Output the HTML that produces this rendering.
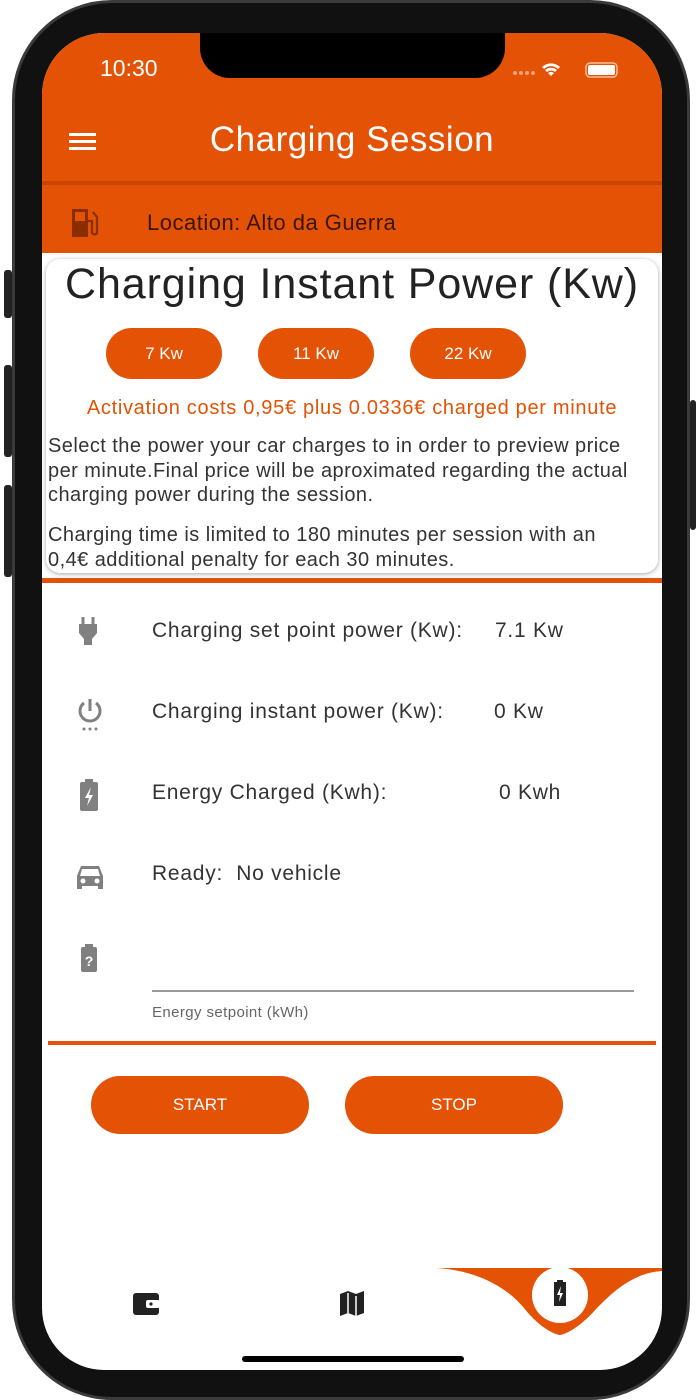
<!DOCTYPE html>
<html><head><style>
*{margin:0;padding:0;box-sizing:border-box}
body{width:700px;height:1400px;background:#fff;font-family:"Liberation Sans",sans-serif;position:relative;overflow:hidden}
.frame{position:absolute;left:12px;top:0;width:678px;height:1400px;background:#111;border-radius:100px;border:3px solid #3a3a3a}
.btnside{position:absolute;background:#222;width:8px;border-radius:3px}
.screen{position:absolute;left:42px;top:33px;width:620px;height:1337px;background:#fff;border-radius:62px;overflow:hidden}
.notch{position:absolute;left:200px;top:33px;width:305px;height:45px;background:#000;border-radius:0 0 30px 30px;z-index:5}
.or{background:#E35205}
.abs{position:absolute}
.t{color:#333;font-size:21px;letter-spacing:0.75px;position:absolute;white-space:nowrap}
.pill{position:absolute;background:#E35205;color:#fff;border-radius:26px;text-align:center}
</style></head><body>
<div class="btnside" style="left:4px;top:270px;height:48px"></div>
<div class="btnside" style="left:4px;top:365px;height:92px"></div>
<div class="btnside" style="left:4px;top:485px;height:92px"></div>
<div class="btnside" style="left:690px;top:400px;height:130px;width:6px"></div>
<div class="frame"></div>
<div class="screen">
  <div class="abs or" style="left:0;top:0;width:620px;height:150px"></div>
  <div class="abs" style="left:0;top:148px;width:620px;height:4px;background:#c94600"></div>
  <div class="abs or" style="left:0;top:152px;width:620px;height:68px"></div>
  <div class="abs" style="left:58px;top:22px;color:#fff;font-size:23px">10:30</div>
  <svg class="abs" style="left:468px;top:27px" width="110" height="20" viewBox="0 0 110 20">
    <g fill="#f3a27a"><circle cx="5" cy="13" r="2"/><circle cx="11" cy="13" r="2"/><circle cx="17" cy="13" r="2"/><circle cx="23" cy="13" r="2"/></g>
    <path d="M41 16l-3-3a5 5 0 0 1 6 0z M35 10a9 9 0 0 1 12 0l-2 2a6 6 0 0 0-8 0z M32 7a13 13 0 0 1 18 0l-2 2a10 10 0 0 0-14 0z" fill="#fff"/>
    <rect x="76" y="3" width="31" height="14" rx="4" fill="none" stroke="#f8c0a0" stroke-width="1.5"/>
    <rect x="78" y="5" width="27" height="10" rx="2" fill="#fff"/>
  </svg>
  <svg class="abs" style="left:27px;top:99px" width="28" height="20"><g fill="#fff"><rect y="1" width="27" height="3"/><rect y="8" width="27" height="3"/><rect y="15" width="27" height="3"/></g></svg>
  <div class="abs" style="left:0;width:620px;top:87px;text-align:center;color:#fff;font-size:35px;letter-spacing:0.5px">Charging Session</div>
  <svg class="abs" style="left:28px;top:174px" width="30" height="32" viewBox="0 0 30 32"><path d="M2 2h16v28H2z" fill="#8a2e00"/><rect x="5" y="5" width="10" height="9" fill="#E35205"/><path d="M18 14h4v12a3 3 0 0 0 5 0V10l-4-5" fill="none" stroke="#8a2e00" stroke-width="2.2"/></svg>
  <div class="abs" style="left:105px;top:177px;font-size:22px;letter-spacing:0.5px;color:#3a1500">Location: Alto da Guerra</div>

  <div class="abs" style="left:4px;top:226px;width:612px;height:314px;border-radius:14px;box-shadow:0 1px 5px rgba(0,0,0,.35);background:#fff"></div>
  <div class="abs" style="left:0;width:620px;top:227px;text-align:center;font-size:43px;letter-spacing:0.9px;color:#222">Charging Instant Power (Kw)</div>
  <div class="pill" style="left:64px;top:295px;width:116px;height:51px;line-height:51px;font-size:17px">7 Kw</div>
  <div class="pill" style="left:216px;top:295px;width:116px;height:51px;line-height:51px;font-size:17px">11 Kw</div>
  <div class="pill" style="left:368px;top:295px;width:116px;height:51px;line-height:51px;font-size:17px">22 Kw</div>
  <div class="abs" style="left:0;width:620px;top:364px;text-align:center;font-size:20px;letter-spacing:0.7px;color:#E35205">Activation costs 0,95€ plus 0.0336€ charged per minute</div>
  <div class="abs" style="left:6px;top:401px;width:600px;font-size:20px;letter-spacing:0.45px;line-height:24.5px;color:#333">Select the power your car charges to in order to preview price per minute.Final price will be aproximated regarding the actual charging power during the session.</div>
  <div class="abs" style="left:6px;top:490px;width:575px;font-size:20px;letter-spacing:0.45px;line-height:24.5px;color:#333">Charging time is limited to 180 minutes per session with an 0,4€ additional penalty for each 30 minutes.</div>
  <div class="abs or" style="left:0;top:545px;width:620px;height:5px"></div>

  <svg class="abs" style="left:34px;top:582px" width="26" height="32" viewBox="0 0 26 32"><path d="M7 2v7M17 2v7" stroke="#808080" stroke-width="3"/><path d="M3 9h18v9l-5 6v6h-8v-6l-5-6z" fill="#808080"/></svg>
  <div class="t" style="left:110px;top:586px">Charging set point power (Kw):</div>
  <div class="t" style="left:453px;top:586px">7.1 Kw</div>

  <svg class="abs" style="left:33px;top:663px" width="30" height="36" viewBox="0 0 30 36"><path d="M15 3v12" stroke="#808080" stroke-width="3"/><path d="M9 7a10 10 0 1 0 12 0" fill="none" stroke="#808080" stroke-width="3"/><g fill="#808080"><circle cx="9" cy="33" r="1.5"/><circle cx="15" cy="33" r="1.5"/><circle cx="21" cy="33" r="1.5"/></g></svg>
  <div class="t" style="left:110px;top:667px">Charging instant power (Kw):</div>
  <div class="t" style="left:452px;top:667px">0 Kw</div>

  <svg class="abs" style="left:36px;top:745px" width="22" height="34" viewBox="0 0 22 34"><path d="M7 1h8v3h3a2 2 0 0 1 2 2v25a2 2 0 0 1-2 2H4a2 2 0 0 1-2-2V6a2 2 0 0 1 2-2h3z" fill="#808080"/><path d="M13 9l-6 11h4l-2 8 6-11h-4z" fill="#fff"/></svg>
  <div class="t" style="left:110px;top:748px">Energy Charged (Kwh):</div>
  <div class="t" style="left:457px;top:748px">0 Kwh</div>

  <svg class="abs" style="left:32px;top:830px" width="32" height="28" viewBox="0 0 32 28"><path d="M7 3h18l4 10v13h-5v-3H8v3H3V13z" fill="#808080"/><path d="M8 6h16l2 7H6z" fill="#fff"/><circle cx="9" cy="18" r="2.5" fill="#fff"/><circle cx="23" cy="18" r="2.5" fill="#fff"/></svg>
  <div class="t" style="left:110px;top:829px">Ready:&nbsp; No vehicle</div>

  <svg class="abs" style="left:38px;top:910px" width="18" height="30" viewBox="0 0 18 30"><path d="M5 1h8v3h2a2 2 0 0 1 2 2v21a2 2 0 0 1-2 2H3a2 2 0 0 1-2-2V6a2 2 0 0 1 2-2h2z" fill="#808080"/><text x="9" y="23" font-size="14" font-weight="bold" fill="#fff" text-anchor="middle" font-family="Liberation Sans">?</text></svg>
  <div class="abs" style="left:110px;top:957px;width:482px;height:2px;background:#999"></div>
  <div class="abs" style="left:110px;top:971px;font-size:15px;letter-spacing:0.4px;color:#666">Energy setpoint (kWh)</div>
  <div class="abs or" style="left:6px;top:1008px;width:608px;height:4px"></div>

  <div class="pill" style="left:49px;top:1043px;width:218px;height:58px;line-height:58px;font-size:17px;border-radius:29px">START</div>
  <div class="pill" style="left:303px;top:1043px;width:218px;height:58px;line-height:58px;font-size:17px;border-radius:29px">STOP</div>

  <svg class="abs" style="left:0;top:1230px" width="620" height="107" viewBox="0 0 620 107">
    <path d="M395 5H620V8C590 10 570 30 555 45C535 68 520 72 518 72C516 72 500 68 482 45C468 28 440 8 395 5Z" fill="#E35205"/>
    <circle cx="518" cy="32" r="28" fill="#fff"/>
    <path d="M512 19h3v-2h6v2h3v24h-12z" fill="#222"/><path d="M519 23l-4 9h3l-1 7 4-9h-3z" fill="#fff"/>
    <rect x="91" y="30" width="26" height="22" rx="3" fill="#222"/><rect x="104" y="37" width="14" height="8" rx="2" fill="#fff"/><circle cx="109" cy="41" r="1.6" fill="#222"/>
    <path d="M298 31l8-3 8 3 8-3v22l-8 3-8-3-8 3z" fill="#222"/><path d="M306 30v20M314 33v20" stroke="#fff" stroke-width="1.5"/>
    <rect x="200" y="93" width="222" height="6" rx="3" fill="#000"/>
  </svg>
</div>
<div class="notch"></div>
</body></html>
